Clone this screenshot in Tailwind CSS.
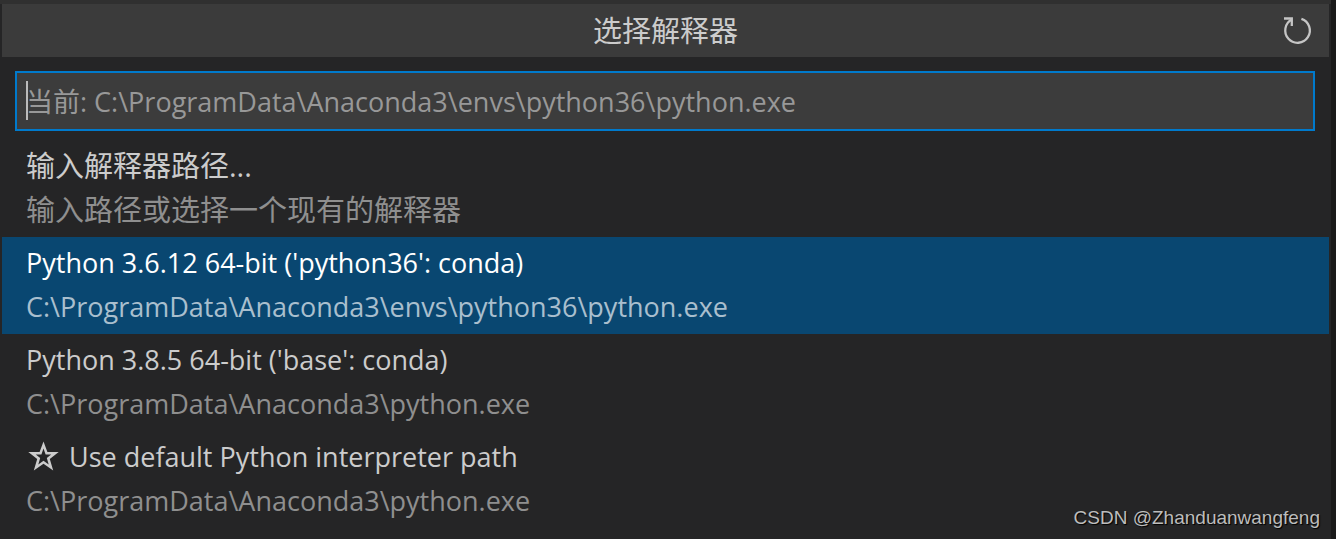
<!DOCTYPE html>
<html lang="zh-CN">
<head>
  <meta charset="UTF-8">
  <meta name="viewport" content="width=device-width, initial-scale=1.0">
  <title>选择解释器</title>
  <script src="https://cdn.jsdelivr.net/npm/@tailwindcss/browser@4"></script>
</head>
<body class="min-h-screen overflow-hidden bg-[#1a1a1a] pr-[5px] font-['Open_Sans','Noto_Sans_CJK_SC',sans-serif] text-[27px] text-[#cccccc]">

  <main class="min-h-screen border-t-4 border-[#303030] bg-[#252526] px-[2px]">

    <!-- Title bar -->
    <header class="grid h-[53px] grid-cols-[1fr_auto_1fr] items-center bg-[#3b3b3b] px-4">
      <h1 class="col-start-2 text-[29px] leading-[44px]">选择解释器</h1>
      <button type="button" aria-label="刷新" class="justify-self-end">
        <svg class="h-8 w-8" viewBox="0 0 32 32" fill="none" stroke="#c5c5c5" stroke-width="2.3">
          <path d="M20.4 3.8A12.3 12.3 0 1 1 10.8 4.6"/>
          <path d="M3 3.5H10.8V11"/>
        </svg>
      </button>
    </header>

    <!-- Search box -->
    <div class="relative mt-[14px] mr-[14px] ml-[13px]">
      <input type="text" aria-label="选择解释器" placeholder="当前: C:\ProgramData\Anaconda3\envs\python36\python.exe" class="block h-[60px] w-full border-2 border-[#007acc] bg-[#3c3c3c] px-[9px] outline-none placeholder:text-[#989898] placeholder:opacity-100">
      <span class="absolute top-[10px] left-[11px] h-[39px] w-[2px] bg-[#bbbbbb]"></span>
    </div>

    <!-- Interpreters -->
    <ul class="mt-[9px] leading-[44px]">
      <li>
        <button type="button" class="block w-full px-6 pt-1 pb-[5px] text-left text-[29px]">
          <span class="block">输入解释器路径...</span>
          <span class="block text-[#8f8f8f]">输入路径或选择一个现有的解释器</span>
        </button>
      </li>
      <li>
        <button type="button" class="block w-full bg-[#094771] px-6 pt-1 pb-[5px] text-left text-white">
          <span class="block">Python 3.6.12 64-bit ('python36': conda)</span>
          <span class="block text-[#a9bfce]">C:\ProgramData\Anaconda3\envs\python36\python.exe</span>
        </button>
      </li>
      <li>
        <button type="button" class="block w-full px-6 pt-1 pb-[5px] text-left">
          <span class="block">Python 3.8.5 64-bit ('base': conda)</span>
          <span class="block text-[#8f8f8f]">C:\ProgramData\Anaconda3\python.exe</span>
        </button>
      </li>
      <li>
        <button type="button" class="block w-full px-6 pt-1 pb-[5px] text-left">
          <span class="flex items-center gap-[7px]">
            <svg class="h-9 w-9" viewBox="0 0 36 36" fill="#cccccc" fill-rule="evenodd">
              <path d="M17.5 2.5L21.4 13H32.7L23.8 19.9L27.2 31.5L17.5 24.8L7.8 31.5L11.2 19.9L2.3 13H13.6ZM17.5 9.6L15.4 15.6H9.8L14.2 19L12.3 25.4L17.5 21.7L22.7 25.4L20.8 19L25.2 15.6H19.6Z"/>
            </svg>
            Use default Python interpreter path
          </span>
          <span class="block text-[#8f8f8f]">C:\ProgramData\Anaconda3\python.exe</span>
        </button>
      </li>
    </ul>
  </main>

  <!-- Watermark -->
  <p class="absolute right-4 bottom-[7px] font-['Liberation_Sans',sans-serif] text-[19px] leading-7 text-[#bdbdbd] [text-shadow:1px_1px_1px_#000]">CSDN @Zhanduanwangfeng</p>

</body>
</html>
